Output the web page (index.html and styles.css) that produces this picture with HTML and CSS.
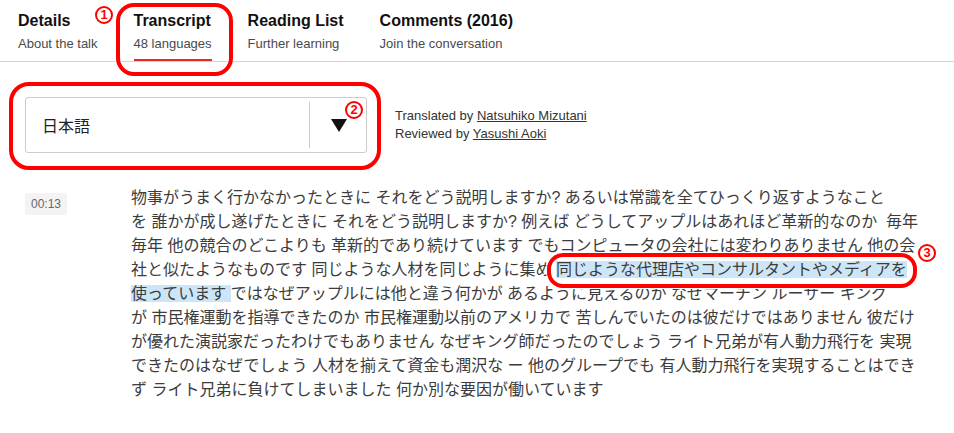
FILE: index.html
```html
<!DOCTYPE html>
<html lang="ja">
<head>
    <meta charset="UTF-8">
    <meta name="viewport" content="width=device-width, initial-scale=1.0">
    <title>Transcript</title>
    <link rel="stylesheet" href="styles.css">
</head>
<body>
    <nav class="tabs">
        <a class="tab" href="#">
            <span class="tab-title">Details</span>
            <span class="tab-sub">About the talk</span>
        </a>
        <a class="tab active" href="#">
            <span class="tab-title">Transcript</span>
            <span class="tab-sub">48 languages</span>
        </a>
        <a class="tab" href="#">
            <span class="tab-title">Reading List</span>
            <span class="tab-sub">Further learning</span>
        </a>
        <a class="tab" href="#">
            <span class="tab-title">Comments (2016)</span>
            <span class="tab-sub">Join the conversation</span>
        </a>
    </nav>

    <section class="language-bar">
        <div class="language-select">
            <span class="language-name">日本語</span>
            <span class="language-toggle"><span class="arrow"></span></span>
        </div>
        <div class="credits">
            <p>Translated by <a href="#">Natsuhiko Mizutani</a></p>
            <p>Reviewed by <a href="#">Yasushi Aoki</a></p>
        </div>
    </section>

    <section class="transcript">
        <div class="timestamp">00:13</div>
        <p class="transcript-text">物事がうまく行かなかったときに それをどう説明しますか? あるいは常識を全てひっくり返すようなこと<br>を 誰かが成し遂げたときに それをどう説明しますか? 例えば どうしてアップルはあれほど革新的なのか&nbsp; 毎年<br>毎年 他の競合のどこよりも 革新的であり続けています でもコンピュータの会社には変わりありません 他の会<br>社と似たようなものです 同じような人材を同じように集め <span class="highlight">同じような代理店やコンサルタントやメディアを<br>使っています </span>ではなぜアップルには他と違う何かが あるように見えるのか なぜマーチン ルーサー キング<br>が 市民権運動を指導できたのか 市民権運動以前のアメリカで 苦しんでいたのは彼だけではありません 彼だけ<br>が優れた演説家だったわけでもありません なぜキング師だったのでしょう ライト兄弟が有人動力飛行を 実現<br>できたのはなぜでしょう 人材を揃えて資金も潤沢な ー 他のグループでも 有人動力飛行を実現することはでき<br>ず ライト兄弟に負けてしまいました 何か別な要因が働いています</p>
    </section>

    <!-- annotation marks -->
    <div class="mark mark-tab"></div>
    <span class="mark-num num-1">1</span>
    <div class="mark mark-select"></div>
    <span class="mark-num num-2">2</span>
    <div class="mark mark-line"></div>
    <span class="mark-num num-3">3</span>
</body>
</html>
```

FILE: styles.css
```css
body {
    margin: 0;
    position: relative;
    font-family: 'Liberation Sans', 'Noto Sans CJK JP', sans-serif;
    color: #333;
    background: #fff;
}

.tabs {
    display: flex;
    gap: 36px;
    padding-left: 18px;
    border-bottom: 1px solid #d4d4d4;
}

.tab {
    display: flex;
    flex-direction: column;
    padding: 12px 0 7px;
    border-bottom: 2px solid transparent;
    text-decoration: none;
}

.tab.active {
    border-bottom-color: #e62b1e;
}

.tab-title {
    font-size: 16px;
    line-height: 18px;
    font-weight: bold;
    color: #111;
}

.tab-sub {
    margin-top: 6px;
    font-size: 13px;
    line-height: 16px;
    color: #4a4a4a;
}

.language-bar {
    display: flex;
    align-items: center;
    gap: 28px;
    margin-top: 35px;
    padding-left: 25px;
}

.language-select {
    display: flex;
    align-items: stretch;
    width: 342px;
    height: 56px;
    box-sizing: border-box;
    border: 1px solid #ccc;
    border-radius: 3px;
}

.language-name {
    flex: 1;
    display: flex;
    align-items: center;
    padding-left: 16px;
    font-size: 16px;
    color: #222;
}

.language-toggle {
    width: 56px;
    margin: 4px 0;
    border-left: 1px solid #ccc;
    display: flex;
    align-items: center;
    justify-content: center;
}

.arrow {
    width: 0;
    height: 0;
    margin-left: 2px;
    border-left: 8px solid transparent;
    border-right: 8px solid transparent;
    border-top: 13px solid #111;
}

.credits p {
    margin: 0;
    font-size: 13px;
    line-height: 18px;
    color: #333;
}

.credits a {
    color: #333;
}

.transcript {
    display: grid;
    grid-template-columns: 42px auto;
    column-gap: 64px;
    align-items: start;
    margin-top: 33px;
    padding-left: 25px;
}

.timestamp {
    margin-top: 7px;
    height: 22px;
    line-height: 22px;
    text-align: center;
    font-size: 12px;
    color: #666;
    background: #f3f3f3;
    border-radius: 3px;
}

.transcript-text {
    margin: 0;
    font-size: 16px;
    line-height: 24px;
    color: #3c3c3c;
    white-space: nowrap;
}

.highlight {
    background: #cce6f8;
}

.mark {
    position: absolute;
    border: 4px solid #f00;
    box-shadow: inset 0 0 0 1px #fff, 0 0 0 1px #fff;
    box-sizing: border-box;
}

.mark-tab {
    left: 116px;
    top: 3px;
    width: 117px;
    height: 73px;
    border-radius: 18px;
}

.mark-select {
    left: 9px;
    top: 82px;
    width: 372px;
    height: 88px;
    border-radius: 20px;
}

.mark-line {
    left: 547px;
    top: 253px;
    width: 370px;
    height: 35px;
    border-radius: 16px;
}

.mark-num {
    position: absolute;
    width: 18px;
    height: 18px;
    box-sizing: border-box;
    border: 2px solid #f00;
    border-radius: 50%;
    background: #fff;
    font-family: 'Liberation Sans', sans-serif;
    font-size: 13px;
    line-height: 14px;
    font-weight: bold;
    text-align: center;
    color: #f00;
}

.num-1 {
    left: 95px;
    top: 6px;
}

.num-2 {
    left: 345px;
    top: 101px;
}

.num-3 {
    left: 918px;
    top: 244px;
}
```
